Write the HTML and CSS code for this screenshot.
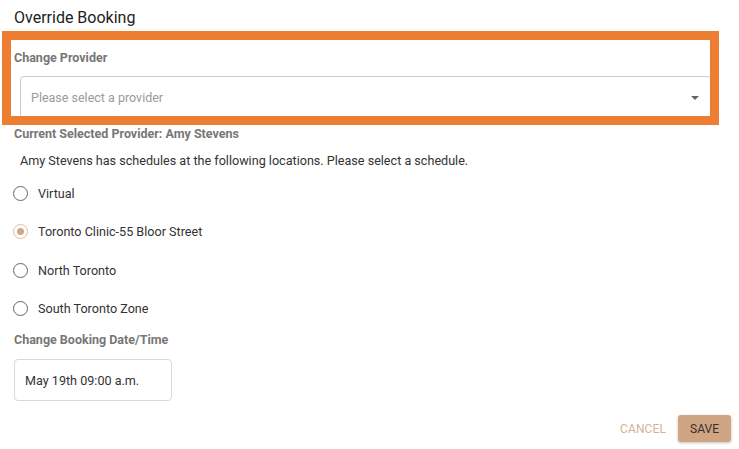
FILE: index.html
```html
<!DOCTYPE html>
<html lang="en">
<head>
<meta charset="utf-8">
<title>Override Booking</title>
<link rel="stylesheet" href="styles.css">
</head>
<body>
<div class="page">
  <h1 class="title">Override Booking</h1>
  <div class="label label-provider">Change Provider</div>
  <div class="select">
    <span class="placeholder">Please select a provider</span>
    <span class="arrow"></span>
  </div>
  <div class="label label-current">Current Selected Provider: Amy Stevens</div>
  <p class="desc">Amy Stevens has schedules at the following locations. Please select a schedule.</p>
  <div class="radios">
    <div class="radio-row"><span class="radio"></span><span class="radio-text">Virtual</span></div>
    <div class="radio-row"><span class="radio checked"></span><span class="radio-text">Toronto Clinic-55 Bloor Street</span></div>
    <div class="radio-row"><span class="radio"></span><span class="radio-text">North Toronto</span></div>
    <div class="radio-row"><span class="radio"></span><span class="radio-text">South Toronto Zone</span></div>
  </div>
  <div class="label label-date">Change Booking Date/Time</div>
  <div class="date-field">May 19th 09:00 a.m.</div>
  <div class="actions">
    <button class="btn-cancel">CANCEL</button>
    <button class="btn-save">SAVE</button>
  </div>
</div>
<div class="highlight"></div>
</body>
</html>
```
FILE: styles.css
```css
html, body {
  margin: 0;
  padding: 0;
  background: #ffffff;
  font-family: Roboto, "Liberation Sans", Arial, sans-serif;
}
.page {
  position: relative;
  width: 739px;
  height: 449px;
  box-sizing: border-box;
  padding: 8px 8px 0 14px;
  overflow: hidden;
}
.title {
  margin: 0;
  font-size: 16px;
  line-height: 20px;
  font-weight: 400;
  color: #222222;
}
.label {
  font-size: 12.5px;
  line-height: 16px;
  font-weight: 700;
  color: #777777;
}
.label-provider { margin-top: 22px; }
.select {
  margin: 10px 0 0 6px;
  width: 692px;
  height: 42px;
  box-sizing: border-box;
  border: 1px solid #cbcbcb;
  border-radius: 4px;
  display: flex;
  align-items: center;
  justify-content: space-between;
  padding: 0 12px 0 10px;
}
.placeholder {
  font-size: 12.5px;
  color: #9a9a9a;
}
.arrow {
  width: 0;
  height: 0;
  border-left: 4px solid transparent;
  border-right: 4px solid transparent;
  border-top: 4px solid #666666;
  margin-top: 1px;
}
.label-current { margin-top: 8px; }
.desc {
  margin: 10px 0 0 6px;
  font-size: 12.6px;
  line-height: 18px;
  color: #333333;
}
.radios {
  margin-top: 4px;
  display: flex;
  flex-direction: column;
}
.radio-row {
  height: 38.5px;
  display: flex;
  align-items: center;
}
.radio {
  width: 15px;
  height: 15px;
  box-sizing: border-box;
  border: 1.8px solid #666666;
  border-radius: 50%;
  margin-left: -1px;
  display: flex;
  align-items: center;
  justify-content: center;
}
.radio.checked {
  border-color: #dcbca3;
}
.radio.checked::after {
  content: "";
  width: 7px;
  height: 7px;
  border-radius: 50%;
  background: #cfa586;
}
.radio-text {
  margin-left: 10px;
  font-size: 12.6px;
  color: #333333;
}
.label-date { margin-top: 4px; }
.date-field {
  margin-top: 11px;
  width: 158px;
  height: 42px;
  box-sizing: border-box;
  border: 1px solid #d9d9d9;
  border-radius: 4px;
  padding-left: 10px;
  display: flex;
  align-items: center;
  font-size: 12.6px;
  color: #333333;
}
.actions {
  margin-top: 14px;
  display: flex;
  justify-content: flex-end;
  align-items: center;
  gap: 12px;
}
.btn-cancel {
  border: none;
  background: none;
  padding: 0;
  font-family: inherit;
  font-size: 12px;
  color: #d6b294;
  letter-spacing: 0.1px;
}
.btn-save {
  width: 53px;
  height: 27px;
  border: none;
  border-radius: 3px;
  background: #cfa584;
  color: #3a2e26;
  font-family: inherit;
  font-size: 12px;
  box-shadow: 0 1px 3px rgba(0,0,0,0.25);
  padding: 0;
}
.highlight {
  position: absolute;
  left: 2px;
  top: 31px;
  width: 717px;
  height: 94px;
  box-sizing: border-box;
  border: 9px solid #ed7d31;
  pointer-events: none;
}
```
